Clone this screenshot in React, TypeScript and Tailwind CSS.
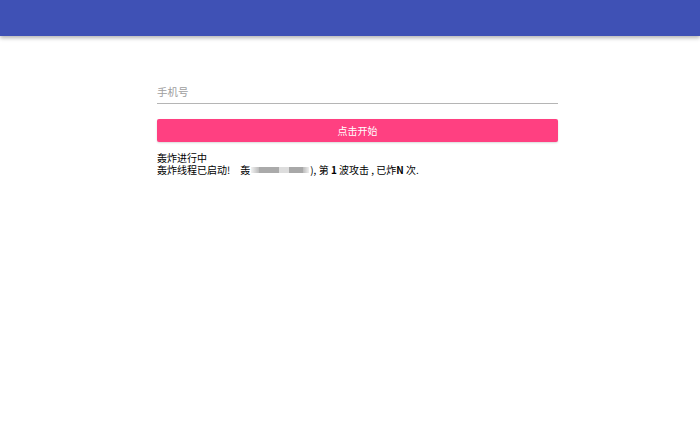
export default function App() {
  return (
    <div className="min-h-[443px] bg-white font-['Noto_Sans_CJK_SC',sans-serif] text-[10px]">
      <header className="h-9 bg-[#3f51b5] shadow-[0_2px_4px_rgba(0,0,0,0.3)]" />
      <main className="ml-[157px] w-[401px] pt-[48px]">
        <div className="border-b border-[#b5b5b5] pb-[4px] text-[10.5px] text-[#9e9e9e] leading-[15px]">手机号</div>
        <button className="mt-[15px] flex h-[23px] w-full items-center justify-center rounded-[2px] bg-[#ff4081] text-white shadow-[0_1px_2px_rgba(0,0,0,0.15)]">
          点击开始
        </button>
        <div className="mt-[10px] leading-[12px] text-black">
          <p>轰炸进行中</p>
          <p className="flex items-center">
            <span>轰炸线程已启动!</span>
            <span className="ml-[10px]">轰</span>
            <span className="mx-[1px] flex h-[6px] w-[58px] items-center">
              <span className="h-full w-[8px] bg-gradient-to-r from-[#f2f2f2] to-[#bbb]" />
              <span className="h-full w-[20px] bg-[#aaa]" />
              <span className="h-full w-[10px] bg-[#ddd]" />
              <span className="h-full w-[14px] bg-[#a8a8a8]" />
              <span className="h-full w-[6px] bg-gradient-to-r from-[#bbb] to-[#eee]" />
            </span>
            <span>), 第 <b>1</b> 波攻击 , 已炸<b>N</b> 次.</span>
          </p>
        </div>
      </main>
    </div>
  );
}
